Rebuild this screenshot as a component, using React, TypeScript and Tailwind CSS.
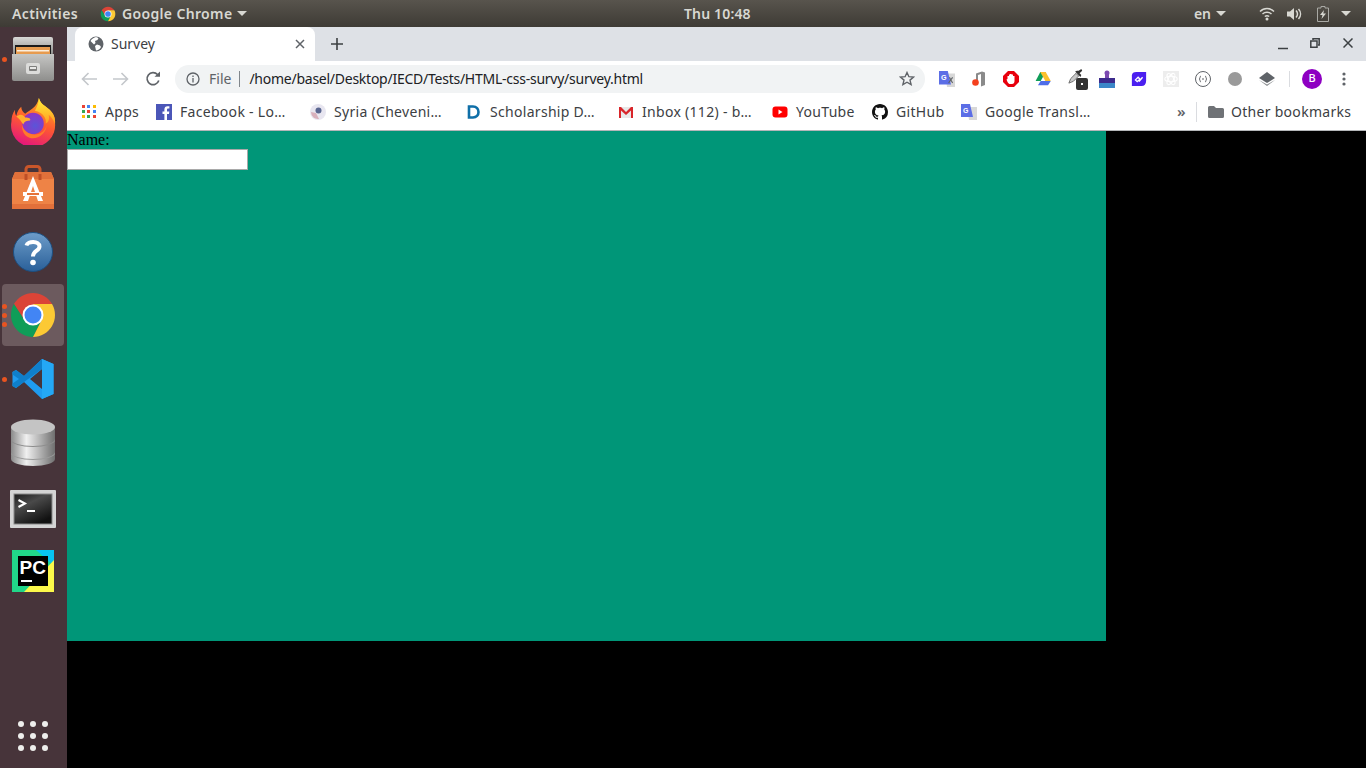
// Ubuntu desktop with Chrome open on the survey page.
import { ReactNode } from "react";

const UI = "font-['Noto_Sans','Open_Sans',sans-serif]";

function ChromeLogo({ size }: { size: number }) {
  return (
    <svg width={size} height={size} viewBox="0 0 48 48">
      <path d="M43.05 13A22 22 0 0 0 4.95 13L15.3 29 24 14Z" fill="#db4437" />
      <path d="M4.95 13A22 22 0 0 0 24 46L32.7 29H15.3Z" fill="#0f9d58" />
      <path d="M24 46A22 22 0 0 0 43.05 13H24L32.7 29Z" fill="#fcc934" />
      <circle cx="24" cy="24" r="10.5" fill="#fff" />
      <circle cx="24" cy="24" r="8.5" fill="#4285f4" />
    </svg>
  );
}

function FilesIcon() {
  return (
    <svg width="42" height="44" viewBox="0 0 42 44">
      <defs>
        <linearGradient id="filesTop" x1="0" y1="0" x2="0" y2="1">
          <stop offset="0" stopColor="#d8d8d6" />
          <stop offset="1" stopColor="#8c8c8a" />
        </linearGradient>
        <linearGradient id="filesBody" x1="0" y1="0" x2="0" y2="1">
          <stop offset="0" stopColor="#c6c6c4" />
          <stop offset="1" stopColor="#8e8e8c" />
        </linearGradient>
      </defs>
      <rect x="1" y="0" width="40" height="18" rx="2" fill="url(#filesTop)" />
      <rect x="3" y="8" width="36" height="9" fill="#1a1a1a" />
      <rect x="4" y="10" width="34" height="7" fill="#e79b4f" />
      <rect x="5" y="13" width="32" height="1.500" fill="#fbeedd" />
      <path d="M0 17H42V42A2 2 0 0 1 40 44H2A2 2 0 0 1 0 42Z" fill="url(#filesBody)" />
      <rect x="14" y="26" width="14" height="11" rx="2" fill="#dcdcda" />
      <rect x="17" y="29" width="8" height="5" rx="1" fill="#7f7f7d" />
      <rect x="18" y="30" width="6" height="2" fill="#e8e8e6" />
    </svg>
  );
}

function FirefoxIcon() {
  return (
    <svg width="46" height="47" viewBox="0 0 46 48">
      <defs>
        <linearGradient id="ffBody" x1="0.7" y1="0" x2="0.35" y2="1">
          <stop offset="0" stopColor="#ffb321" />
          <stop offset="0.5" stopColor="#ff5a30" />
          <stop offset="1" stopColor="#e3147f" />
        </linearGradient>
        <linearGradient id="ffTop" x1="0.6" y1="0" x2="0.6" y2="1">
          <stop offset="0" stopColor="#fff13b" />
          <stop offset="1" stopColor="#ff9a1f" />
        </linearGradient>
        <radialGradient id="ffBall" cx="0.6" cy="0.6" r="0.7">
          <stop offset="0" stopColor="#5a55d8" />
          <stop offset="1" stopColor="#9a2fc0" />
        </radialGradient>
      </defs>
      <path d="M29 0C31 7 36 8 40 12 44 16 46 20 45.500 26A22.500 22 0 1 1 1 24C1 20 2 16 4.500 12 4.500 15 5 17 6 18 7 14 8.500 11 11 9 11 12 13 15 15 16 20 12 27 10 29 0Z" fill="url(#ffBody)" />
      <path d="M29 0C31 7 36 8 40 12 44 16 46 20 45.500 27 44 22 42 20 39 17 40 21 39 25 36 26 37 20 33 15 25 13 27 9 29 5 29 0Z" fill="url(#ffTop)" />
      <circle cx="23" cy="26" r="11" fill="url(#ffBall)" />
      <path d="M6 19C10 16 13 17 15 20 19 20 21 21 20 23 17 23 14 24 13 27 11 24 9 21 6 19Z" fill="#ffb02e" />
      <path d="M12 27C13 34 20 38 27 37 33 36 37 31 37 26 37 36 29 42 21 41 15 40 11 34 12 27Z" fill="#ff7a2a" />
    </svg>
  );
}

function StoreIcon() {
  return (
    <svg width="42" height="44" viewBox="0 0 42 44">
      <path d="M14 8V4A3 3 0 0 1 17 1.500H25A3 3 0 0 1 28 4V8" fill="none" stroke="#c9562a" strokeWidth="3" />
      <path d="M3 7H39L42 14V44H0V14Z" fill="#ee8346" />
      <path d="M3 7H39L42 14H0Z" fill="#e0703a" />
      <rect x="0" y="39" width="42" height="5" fill="#e2703a" />
      <path d="M14 9V15M28 9V15" stroke="#bf4f26" strokeWidth="3" />
      <path d="M21 11 11 36H16L21 21 26 36H31Z" fill="#fff" />
      <rect x="11" y="27" width="20" height="4" fill="#fff" />
      <rect x="15" y="28" width="12" height="2" fill="#e5733a" />
    </svg>
  );
}

function HelpIcon() {
  return (
    <svg width="40" height="40" viewBox="0 0 40 40">
      <defs>
        <linearGradient id="helpBg" x1="0" y1="0" x2="0" y2="1">
          <stop offset="0" stopColor="#6d9cc9" />
          <stop offset="1" stopColor="#2a6099" />
        </linearGradient>
      </defs>
      <circle cx="20" cy="20" r="19.500" fill="url(#helpBg)" stroke="#1d4f80" />
      <path d="M13.500 13.500C14.500 9 26.500 8.500 26.500 14.500 26.500 19 20 18.500 20 24.500" fill="none" stroke="#fff" strokeWidth="4" />
      <circle cx="20" cy="30.500" r="2.800" fill="#fff" />
    </svg>
  );
}

function VsCodeIcon() {
  return (
    <svg width="42" height="42" viewBox="0 0 42 42">
      <path d="M30 1 41.500 6V36L30 41 12 24 4 30 0.500 28V14L4 12 12 18ZM30 11 18 21 30 31Z" fill="#1f9cf0" />
      <path d="M30 1 41.500 6V36L30 41Z" fill="#24a8f5" />
      <path d="M30 1V11L12 24 4 30 0.500 28V25.500L7 21 0.500 16.500V14L4 12 12 18Z" fill="#0f7fcb" />
    </svg>
  );
}

function DatabaseIcon() {
  return (
    <svg width="44" height="48" viewBox="0 0 44 48">
      <defs>
        <linearGradient id="dbBody" x1="0" y1="0" x2="1" y2="0">
          <stop offset="0" stopColor="#8a8a8a" />
          <stop offset="0.35" stopColor="#f0f0f0" />
          <stop offset="1" stopColor="#6f6f6f" />
        </linearGradient>
      </defs>
      <path d="M0 34V40C0 44 10 47 22 47S44 44 44 40V34Z" fill="url(#dbBody)" />
      <ellipse cx="22" cy="34" rx="22" ry="7" fill="#9a9a9a" />
      <path d="M0 21V33C0 37 10 40 22 40S44 37 44 33V21Z" fill="url(#dbBody)" />
      <ellipse cx="22" cy="21" rx="22" ry="7" fill="#8d8d8d" />
      <path d="M0 8V20C0 24 10 27 22 27S44 24 44 20V8Z" fill="url(#dbBody)" />
      <ellipse cx="22" cy="8" rx="22" ry="7.500" fill="#c4c4c4" />
    </svg>
  );
}

function TerminalIcon() {
  return (
    <svg width="46" height="38" viewBox="0 0 46 38">
      <defs>
        <linearGradient id="termBg" x1="0" y1="0" x2="0.6" y2="1">
          <stop offset="0" stopColor="#1c1c1c" />
          <stop offset="0.4" stopColor="#4a4a4a" />
          <stop offset="1" stopColor="#111" />
        </linearGradient>
      </defs>
      <rect x="0" y="0" width="46" height="38" rx="1" fill="#d4d4d4" />
      <rect x="4" y="4" width="38" height="30" fill="url(#termBg)" stroke="#888" />
      <path d="M8.500 10 15 13.500 8.500 17" fill="none" stroke="#fff" strokeWidth="2" />
      <rect x="17" y="20" width="8" height="2" fill="#fff" />
    </svg>
  );
}

function PyCharmIcon() {
  return (
    <svg width="42" height="42" viewBox="0 0 42 42">
      <rect width="42" height="42" fill="#21d789" />
      <path d="M24 0H42V16Z" fill="#07c3f2" />
      <path d="M42 10V42H12Z" fill="#fcf84a" />
      <rect x="6" y="6" width="30" height="30" fill="#000" />
      <text x="7.500" y="24" fontFamily="'Liberation Sans', sans-serif" fontWeight="700" fontSize="19" fill="#fff">PC</text>
      <rect x="9" y="30" width="11" height="2" fill="#fff" />
    </svg>
  );
}

const DOCK: { icon: ReactNode; dots: number; shift: string; active?: boolean }[] = [
  { icon: <FilesIcon />, dots: 1, shift: "pb-[1px]" },
  { icon: <FirefoxIcon />, dots: 0, shift: "pb-[3px]" },
  { icon: <StoreIcon />, dots: 0, shift: "pb-0" },
  { icon: <HelpIcon />, dots: 0, shift: "pt-[2px]" },
  { icon: <ChromeLogo size={48} />, dots: 3, shift: "pb-0", active: true },
  { icon: <VsCodeIcon />, dots: 1, shift: "pb-[1px]" },
  { icon: <DatabaseIcon />, dots: 0, shift: "pb-0" },
  { icon: <TerminalIcon />, dots: 0, shift: "pt-[3px]" },
  { icon: <PyCharmIcon />, dots: 0, shift: "pb-0" },
];

function Dock() {
  return (
    <aside className="flex w-[67px] shrink-0 flex-col bg-[#47343a] pb-[17px]">
      <div className="flex flex-col">
        {DOCK.map((d, i) => (
          <div key={i} className={`relative flex h-[64px] w-[67px] items-center justify-center ${d.shift}`}>
            {d.active && <div className="absolute left-[2px] top-[1px] h-[62px] w-[62px] rounded-[4px] bg-[#6c5a5e]" />}
            <div className="relative ml-[-1px]">{d.icon}</div>
            {d.dots > 0 && (
              <div className="absolute left-[2px] top-0 flex h-full flex-col justify-center gap-[4px]">
                {Array.from({ length: d.dots }).map((_, j) => (
                  <span key={j} className="h-[5px] w-[5px] rounded-full bg-[#e95420]" />
                ))}
              </div>
            )}
          </div>
        ))}
      </div>
      <div className="ml-[18px] mt-auto grid w-[30px] grid-cols-3 gap-[6px]">
        {Array.from({ length: 9 }).map((_, i) => (
          <span key={i} className="h-[6px] w-[6px] rounded-full bg-[#eeeeec]" />
        ))}
      </div>
    </aside>
  );
}

function Caret({ className }: { className: string }) {
  return (
    <svg width="10" height="5" viewBox="0 0 10 5" className={className}>
      <path d="M0 0H10L5 5Z" fill="currentColor" />
    </svg>
  );
}

function TopBar() {
  return (
    <header className={`relative flex h-[27px] shrink-0 items-center bg-gradient-to-b from-[#58544d] to-[#3e3b35] pl-[12px] pr-[15px] text-[14px] font-semibold text-[#d8d8d2] ${UI}`}>
      <span className="tracking-[0.35px]">Activities</span>
      <span className="ml-[22px]"><ChromeLogo size={16} /></span>
      <span className="ml-[6px] tracking-[0.35px]">Google Chrome</span>
      <Caret className="ml-[5px]" />
      <span className="absolute left-[684px] tracking-[0.15px]">Thu 10:48</span>
      <span className="ml-auto">en</span>
      <Caret className="ml-[5px] mr-[33px]" />
      <svg width="16" height="14" viewBox="0 0 16 14" fill="none" stroke="#d8d8d2" strokeWidth="1.500">
        <path d="M1 4.500C5 0.500 11 0.500 15 4.500M3.500 7C6 4.800 10 4.800 12.500 7M5.800 9.500C7 8.600 9 8.600 10.200 9.500" />
        <circle cx="8" cy="12" r="1.500" fill="#d8d8d2" stroke="none" />
      </svg>
      <svg width="16" height="14" viewBox="0 0 16 14" className="ml-[12px]" fill="#d8d8d2">
        <path d="M0 4.500H3L7 1V13L3 9.500H0Z" />
        <path d="M9 3.500C11 5.500 11 8.500 9 10.500M11.500 2C14.200 5 14.200 9 11.500 12" fill="none" stroke="#d8d8d2" strokeWidth="1.500" />
      </svg>
      <svg width="12" height="16" viewBox="0 0 12 16" className="ml-[14px]">
        <path d="M4 0.500H8V2H11.500V15.500H0.500V2H4Z" fill="none" stroke="#a9a9a4" />
        <path d="M7 4 3 9H5.500L4.500 13 9 7.500H6.300Z" fill="#d8d8d2" />
      </svg>
      <Caret className="ml-[12px]" />
    </header>
  );
}

function TabStrip() {
  return (
    <div className="flex h-[34px] shrink-0 items-end bg-[#dee1e6] pl-[8px] text-[#3c4043]">
      <div className="flex h-[34px] w-[240px] items-center rounded-t-[8px] bg-white pl-[13px] pr-[10px]">
        <svg width="16" height="16" viewBox="0 0 16 16">
          <circle cx="8" cy="8" r="7.500" fill="#5f6368" />
          <path d="M8 1C5 2 3.500 3 2.500 5L6 8.500 7.500 7 7 5 9.500 4 10.500 2ZM9 8.500 7 10 8 14.500C10 14.500 12 13 13 11L12 9.500Z" fill="#fff" />
        </svg>
        <span className={`ml-[7px] pb-[2px] text-[14px] ${UI}`}>Survey</span>
        <svg width="10" height="10" viewBox="0 0 10 10" className="ml-auto" stroke="#5f6368" strokeWidth="1.500">
          <path d="M1 1 9 9M9 1 1 9" />
        </svg>
      </div>
      <svg width="12" height="12" viewBox="0 0 12 12" className="mb-[11px] ml-[16px]" stroke="#3c4043" strokeWidth="1.600">
        <path d="M6 0V12M0 6H12" />
      </svg>
      <div className="mb-[11px] ml-auto flex items-center pr-[13px]">
        <svg width="10" height="10" viewBox="0 0 10 10" className="mt-[4px]" stroke="#3c4043" strokeWidth="1.500"><path d="M0 8.500H10" /></svg>
        <svg width="10" height="10" viewBox="0 0 10 10" className="ml-[22px]" fill="none" stroke="#3c4043" strokeWidth="1.500">
          <path d="M3 2V0.800H9.200V7H8M0.800 3H7V9.200H0.800Z" fill="#dee1e6" />
        </svg>
        <svg width="10" height="10" viewBox="0 0 10 10" className="ml-[23px]" stroke="#3c4043" strokeWidth="1.500"><path d="M0.500 0.500 9.500 9.500M9.500 0.500 0.500 9.500" /></svg>
      </div>
    </div>
  );
}

const EXTENSIONS: ReactNode[] = [
  <svg width="16" height="16" viewBox="0 0 20 20">
    <path d="M8 3H20V20H10Z" fill="#d8d8d8" />
    <path d="M0 0H11L15 17H0Z" fill="#5c6ee6" />
    <text x="2.500" y="11" fontSize="9" fontWeight="700" fontFamily="'Liberation Sans', sans-serif" fill="#fff">G</text>
    <path d="M13 8 17 15M17 8 12 15" stroke="#5f6368" strokeWidth="1.400" />
  </svg>,
  <svg width="16" height="16" viewBox="0 0 16 16">
    <path d="M5 2.500 11 0.500 14 1.500V14L10 15.500V3L7 4V9H5Z" fill="#8a8a8a" />
    <circle cx="4.500" cy="11.500" r="3.300" fill="#f4401e" />
  </svg>,
  <svg width="16" height="16" viewBox="0 0 16 16">
    <path d="M5 0H11L16 5V11L11 16H5L0 11V5Z" fill="#e8000d" />
    <path d="M4.500 8V5H6V3.500H7V3H8.500V3.500H10V5H11.500V10C11.500 12 10.500 13 9 13H7C6 13 5.500 12.500 4.500 11L3.500 8.500Z" fill="#fff" />
  </svg>,
  <svg width="16" height="14" viewBox="0 0 20 18">
    <path d="M6.500 0H13.500L7 11.500H0.500Z" fill="#0f9d58" />
    <path d="M6.500 0H13.500L20 11.500H13Z" fill="#fbc02d" />
    <path d="M3.500 17 7 11.500H20L16.500 17Z" fill="#4f6ee8" />
  </svg>,
  <div className="relative ml-[6px] h-[22px] w-[20px]">
    <svg width="16" height="16" viewBox="0 0 18 18" className="absolute left-0 top-0">
      <path d="M1 17 3 12 9 6 12 9 6 15Z" fill="#c9c9c9" stroke="#666" />
      <path d="M8 4 14 10 15 8 13 6 16 3 15 1 12 3 10 3Z" fill="#333" />
    </svg>
    <span className="absolute bottom-0 right-0 flex h-[12px] w-[12px] items-center justify-center rounded-[2px] bg-[#333]">
      <span className="h-[2px] w-[2px] bg-white" />
    </span>
  </div>,
  <svg width="16" height="18" viewBox="0 0 16 18">
    <circle cx="8" cy="3" r="2.500" fill="#7b4ab0" />
    <rect x="6" y="4" width="4" height="4" fill="#7b4ab0" />
    <rect x="0" y="8" width="16" height="5" fill="#3c2a8c" />
    <rect x="0" y="13" width="16" height="5" fill="#3b87c8" />
  </svg>,
  <svg width="16" height="16" viewBox="0 0 18 18">
    <path d="M1 5C1 2 3 1 6 1H17V11C17 15 15 17 12 17H1Z" fill="#4b1ff0" />
    <path d="M5 10 8 7 10 9 7 12ZM9 12 13 7" fill="none" stroke="#fff" strokeWidth="1.500" />
  </svg>,
  <svg width="16" height="16" viewBox="0 0 18 18">
    <rect width="18" height="18" fill="#ededed" />
    <g fill="none" stroke="#fff" strokeWidth="1.200">
      <ellipse cx="9" cy="9" rx="7" ry="3" />
      <ellipse cx="9" cy="9" rx="7" ry="3" transform="rotate(60 9 9)" />
      <ellipse cx="9" cy="9" rx="7" ry="3" transform="rotate(120 9 9)" />
    </g>
  </svg>,
  <svg width="16" height="16" viewBox="0 0 16 16" fill="none" stroke="#5f6368">
    <circle cx="8" cy="8" r="7.500" />
    <path d="M6 5C4.500 5 5.500 8 4 8 5.500 8 4.500 11 6 11M10 5C11.500 5 10.500 8 12 8 10.500 8 11.500 11 10 11M7 8H9" />
  </svg>,
  <span className="h-[14px] w-[14px] rounded-full bg-[#9a9a9a]" />,
  <svg width="16" height="16" viewBox="0 0 16 16">
    <path d="M8 1 16 7 8 12 0 7Z" fill="#5f6368" />
    <path d="M0 9 8 15 16 9 8 13.500Z" fill="#8a8d90" />
  </svg>,
];

function ExtensionIcons() {
  return (
    <div className="ml-[6px] flex items-center">
      {EXTENSIONS.map((icon, i) => (
        <span key={i} className="flex h-[24px] w-[32px] items-center justify-center">{icon}</span>
      ))}
      <span className="ml-[6px] h-[16px] w-px bg-[#dadce0]" />
      <span className={`ml-[12px] flex h-[20px] w-[20px] items-center justify-center rounded-full bg-[#8e00c2] text-[11px] font-medium text-white ${UI}`}>B</span>
      <svg width="4" height="14" viewBox="0 0 4 14" className="ml-[20px]" fill="#5f6368">
        <circle cx="2" cy="2" r="1.600" />
        <circle cx="2" cy="7" r="1.600" />
        <circle cx="2" cy="12" r="1.600" />
      </svg>
    </div>
  );
}

function Toolbar() {
  return (
    <div className="flex h-[35px] shrink-0 items-center bg-white pl-[14px]">
      <svg width="16" height="14" viewBox="0 0 16 14" fill="none" stroke="#c4c7cb" strokeWidth="1.600">
        <path d="M16 7H1.500M7.500 1 1.500 7 7.500 13" />
      </svg>
      <svg width="16" height="14" viewBox="0 0 16 14" fill="none" stroke="#c4c7cb" strokeWidth="1.600" className="ml-[16px]">
        <path d="M0 7H14.500M8.500 1 14.500 7 8.500 13" />
      </svg>
      <svg width="16" height="16" viewBox="0 0 16 16" fill="none" className="ml-[16px]">
        <path d="M13.800 9.500A6 6 0 1 1 12.500 3.500" stroke="#5f6368" strokeWidth="1.700" />
        <path d="M9.500 5.800H15V0.500Z" fill="#5f6368" />
      </svg>
      <div className={`ml-[14px] flex h-[28px] w-[750px] items-center rounded-full bg-[#f1f3f4] pl-[11px] pr-[10px] text-[14px] ${UI}`}>
        <svg width="14" height="14" viewBox="0 0 14 14" fill="none" stroke="#5f6368" strokeWidth="1.300">
          <circle cx="7" cy="7" r="6" />
          <path d="M7 6V10.500M7 3.500V5" />
        </svg>
        <span className="ml-[9px] text-[#5f6368]">File</span>
        <span className="ml-[8px] h-[16px] w-px bg-[#80868b]" />
        <span className="ml-[9px] tracking-[-0.25px] text-[#202124]">/home/basel/Desktop/IECD/Tests/HTML-css-survy/survey.html</span>
        <svg width="16" height="15" viewBox="0 0 16 15" fill="none" stroke="#5f6368" strokeWidth="1.400" className="ml-auto">
          <path d="M8 1.500 9.900 5.700 14.500 6.100 11 9.100 12.100 13.600 8 11.200 3.900 13.600 5 9.100 1.500 6.100 6.100 5.700Z" />
        </svg>
      </div>
      <ExtensionIcons />
    </div>
  );
}

const APP_COLORS = ["#ea4335", "#4285f4", "#fbbc04", "#34a853", "#ea4335", "#4285f4", "#fbbc04", "#34a853", "#ea4335"];

const BOOKMARKS: { label: string; icon: ReactNode; text: string; gap: string }[] = [
  {
    label: "Apps",
    gap: "ml-0",
    text: "w-[35px]",
    icon: (
      <span className="grid h-[16px] w-[16px] grid-cols-3 gap-[2px] p-px">
        {APP_COLORS.map((c, i) => (
          <span key={i} className="h-[3px] w-[3px]" style={{ background: c }} />
        ))}
      </span>
    ),
  },
  {
    label: "Facebook - Lo…",
    gap: "ml-[16px]",
    text: "w-[107px]",
    icon: (
      <svg width="16" height="16" viewBox="0 0 16 16">
        <rect width="16" height="16" fill="#4b56b8" />
        <path d="M11 16V10H13L13.300 7.500H11V6C11 5 11.400 4.600 12.300 4.600H13.400V2.300H11.500C9.500 2.300 8.400 3.500 8.400 5.600V7.500H6.500V10H8.400V16Z" fill="#fff" />
      </svg>
    ),
  },
  {
    label: "Syria (Cheveni…",
    gap: "ml-[23px]",
    text: "w-[110px]",
    icon: (
      <svg width="16" height="16" viewBox="0 0 16 16">
        <circle cx="8" cy="8" r="8" fill="#e8e6f0" />
        <path d="M1 8A7 7 0 0 0 9 15L6 9Z" fill="#d8b0bc" />
        <circle cx="8.500" cy="6.500" r="3" fill="#5a6690" />
      </svg>
    ),
  },
  {
    label: "Scholarship D…",
    gap: "ml-[22px]",
    text: "w-[109px]",
    icon: (
      <svg width="16" height="16" viewBox="0 0 16 16" fill="none">
        <path d="M3 2.500H7C10.500 2.500 12.500 4.800 12.500 8S10.500 13.500 7 13.500H3Z" stroke="#0f6fa8" strokeWidth="2.600" />
      </svg>
    ),
  },
  {
    label: "Inbox (112) - b…",
    gap: "ml-[19px]",
    text: "w-[110px]",
    icon: (
      <svg width="16" height="16" viewBox="0 0 16 16">
        <rect x="1" y="3" width="14" height="11" fill="#e8e8e8" />
        <path d="M1 3H3L8 8 13 3H15V14H13V6.500L8 11 3 6.500V14H1Z" fill="#d9252a" />
      </svg>
    ),
  },
  {
    label: "YouTube",
    gap: "ml-[20px]",
    text: "w-[60px]",
    icon: (
      <svg width="16" height="16" viewBox="0 0 16 16">
        <rect x="0.500" y="2.500" width="15" height="11" rx="3" fill="#f00" />
        <path d="M6.500 5.500 10.500 8 6.500 10.500Z" fill="#fff" />
      </svg>
    ),
  },
  {
    label: "GitHub",
    gap: "ml-[16px]",
    text: "w-[49px]",
    icon: (
      <svg width="16" height="16" viewBox="0 0 16 16" fill="#111">
        <path d="M8 0C3.580 0 0 3.580 0 8c0 3.540 2.290 6.530 5.470 7.590.4.070.55-.17.55-.38 0-.19-.01-.82-.01-1.490-2.010.37-2.530-.49-2.690-.94-.09-.23-.48-.94-.82-1.130-.28-.15-.68-.52-.01-.53.630-.01 1.080.58 1.230.82.720 1.210 1.870.87 2.330.66.070-.52.280-.87.510-1.070-1.780-.2-3.640-.89-3.640-3.950 0-.87.310-1.590.82-2.150-.08-.2-.36-1.020.08-2.120 0 0 .67-.21 2.200.82.640-.18 1.320-.27 2-.27s1.360.09 2 .27c1.530-1.040 2.200-.82 2.200-.82.440 1.100.16 1.920.08 2.120.51.560.82 1.270.82 2.150 0 3.070-1.870 3.750-3.650 3.950.29.250.54.730.54 1.480 0 1.070-.01 1.930-.01 2.200 0 .21.150.46.550.38A8.010 8.010 0 0 0 16 8c0-4.420-3.580-8-8-8z" />
      </svg>
    ),
  },
  {
    label: "Google Transl…",
    gap: "ml-[16px]",
    text: "w-[109px]",
    icon: (
      <svg width="16" height="16" viewBox="0 0 16 16">
        <path d="M6 3H16V16H8Z" fill="#d8d8d8" />
        <path d="M0 0H9L12 13H0Z" fill="#5c6ee6" />
        <text x="2" y="9" fontSize="7" fontWeight="700" fontFamily="'Liberation Sans', sans-serif" fill="#fff">G</text>
      </svg>
    ),
  },
];

function BookmarksBar() {
  return (
    <div className={`flex h-[35px] shrink-0 items-center border-b border-[#b4b6b9] bg-white pb-[3px] pl-[14px] text-[14px] tracking-[0.3px] text-[#3c4043] ${UI}`}>
      {BOOKMARKS.map((b) => (
        <div key={b.label} className={`flex items-center gap-[8px] ${b.gap}`}>
          {b.icon}
          <span className={`whitespace-nowrap ${b.text}`}>{b.label}</span>
        </div>
      ))}
      <span className="ml-[83px] text-[15px] font-semibold leading-none text-[#5f6368]">»</span>
      <span className="ml-[10px] h-[20px] w-px bg-[#dadce0]" />
      <svg width="16" height="14" viewBox="0 0 16 14" className="ml-[11px]" fill="#6f7276">
        <path d="M1.500 1H6L8 3H14.500A1.500 1.500 0 0 1 16 4.500V11.500A1.500 1.500 0 0 1 14.500 13H1.500A1.500 1.500 0 0 1 0 11.500V2.500A1.500 1.500 0 0 1 1.500 1Z" />
      </svg>
      <span className="ml-[7px] whitespace-nowrap">Other bookmarks</span>
    </div>
  );
}

function SurveyPage() {
  return (
    <div className="min-h-0 flex-1 bg-black">
      <form className="h-[510px] w-[1039px] bg-[#009678] font-['Liberation_Serif',serif] text-[16px] leading-[18px] text-black">
        <label htmlFor="name" className="block">Name:</label>
        <input
          id="name"
          type="text"
          readOnly
          className="block h-[21px] w-[181px] border border-[#a9a9a9] bg-white outline-none"
        />
      </form>
    </div>
  );
}

export default function App() {
  return (
    <div className="flex h-[768px] w-[1366px] flex-col overflow-hidden">
      <TopBar />
      <div className="flex min-h-0 flex-1">
        <Dock />
        <main className="flex min-w-0 flex-1 flex-col">
          <TabStrip />
          <Toolbar />
          <BookmarksBar />
          <SurveyPage />
        </main>
      </div>
    </div>
  );
}
